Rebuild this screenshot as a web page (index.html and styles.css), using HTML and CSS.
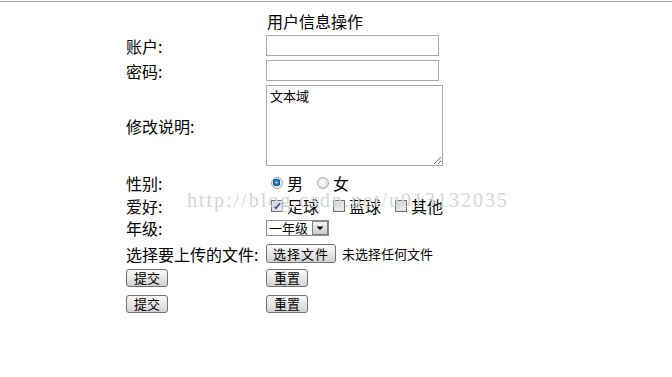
FILE: index.html
```html
<!DOCTYPE html>
<html lang="zh-CN">
<head>
    <meta charset="UTF-8">
    <title>用户信息操作</title>
    <link rel="stylesheet" href="styles.css">
</head>
<body>

<div class="page">
    <form class="user-form">
        <div class="label"></div>
        <div class="title">用户信息操作</div>

        <div class="label">账户:</div>
        <div class="field"><input type="text" class="text-box"></div>

        <div class="label">密码:</div>
        <div class="field"><input type="password" class="text-box"></div>

        <div class="label">修改说明:</div>
        <div class="field"><textarea class="note">文本域</textarea></div>

        <div class="label">性别:</div>
        <div class="field">
            <label class="opt"><input type="radio" name="sex" checked>男</label>
            <label class="opt"><input type="radio" name="sex">女</label>
        </div>

        <div class="label">爱好:</div>
        <div class="field">
            <label class="opt"><input type="checkbox" checked>足球</label>
            <label class="opt"><input type="checkbox">蓝球</label>
            <label class="opt"><input type="checkbox">其他</label>
        </div>

        <div class="label">年级:</div>
        <div class="field">
            <select class="grade">
                <option>一年级</option>
                <option>二年级</option>
                <option>三年级</option>
            </select>
        </div>

        <div class="label">选择要上传的文件:</div>
        <div class="field">
            <button type="button" class="btn file-btn">选择文件</button>
            <span class="file-name">未选择任何文件</span>
        </div>

        <div class="cell"><button type="submit" class="btn">提交</button></div>
        <div class="field"><button type="reset" class="btn">重置</button></div>

        <div class="cell"><button type="submit" class="btn">提交</button></div>
        <div class="field"><button type="reset" class="btn">重置</button></div>
    </form>

    <div class="watermark">http://blog.csdn.net/u013132035</div>
</div>

</body>
</html>
```

FILE: styles.css
```css
body {
    margin: 0;
    background: #fff;
    color: #000;
    font-family: "Noto Sans CJK SC", "Liberation Sans", sans-serif;
}
.page {
    position: relative;
    margin-top: 1px;
    border-top: 1px solid #a9a9a9;
    height: 375px;
}
.user-form {
    display: grid;
    grid-template-columns: 140px auto;
    grid-template-rows: 22px 27px 23px 87px 28px 18px 26px 25px 23px 29px;
    align-items: center;
    margin-left: 126px;
    padding-top: 8px;
    font-size: 16px;
    line-height: 18px;
}
.label {
    white-space: nowrap;
}
.title {
    padding-left: 1px;
}
.field, .cell {
    display: flex;
    align-items: center;
}
.text-box {
    box-sizing: border-box;
    width: 173px;
    height: 21px;
    margin: 0;
    border: 1px solid #a9a9a9;
    padding: 1px 3px;
    font-size: 13px;
}
.note {
    box-sizing: border-box;
    width: 177px;
    height: 81px;
    margin: 0;
    border: 1px solid #a9a9a9;
    padding: 2px 3px;
    font-family: "Noto Sans CJK SC", sans-serif;
    font-size: 13px;
    line-height: 16px;
    resize: both;
}
.opt {
    display: flex;
    align-items: center;
    margin-right: 9px;
}
.opt input {
    appearance: none;
    -webkit-appearance: none;
    box-sizing: border-box;
    width: 12px;
    height: 12px;
    margin: 0 4px 0 5px;
}
.opt input[type="radio"] {
    border: 1px solid #a8a8a8;
    border-radius: 50%;
    background: radial-gradient(circle at 40% 40%, #ffffff 0, #e6e6e6 60%, #c4c4c4 100%);
}
.opt input[type="radio"]:checked {
    background: radial-gradient(circle at 45% 45%, #a8e4ff 0, #2f90d6 1.5px, #0c4f8e 3.6px, #f2f2f2 3.8px, #cfcfcf 100%);
}
.opt input[type="checkbox"] {
    border: 1px solid #6f6f6f;
    background: linear-gradient(135deg, #cfcfcf 0, #f6f6f6 100%);
    box-shadow: inset 0 0 0 1px #e2e2e2;
}
.opt input[type="checkbox"]:checked {
    background: url("data:image/svg+xml,%3Csvg xmlns='http://www.w3.org/2000/svg' width='10' height='10'%3E%3Cpath d='M2 5 L4 7.2 L8 2.2' fill='none' stroke='%23304ea8' stroke-width='1.8'/%3E%3C/svg%3E") center / 10px 10px no-repeat, linear-gradient(135deg, #cfcfcf 0, #f6f6f6 100%);
}
.grade {
    appearance: none;
    -webkit-appearance: none;
    box-sizing: border-box;
    width: 63px;
    height: 16px;
    margin: 0;
    border: 1px solid #8d8d8d;
    padding: 0 0 0 2px;
    font-family: "Noto Sans CJK SC", sans-serif;
    font-size: 13px;
    line-height: 14px;
    background: url("data:image/svg+xml,%3Csvg xmlns='http://www.w3.org/2000/svg' width='16' height='14'%3E%3Cdefs%3E%3ClinearGradient id='g' x1='0' y1='0' x2='0' y2='1'%3E%3Cstop offset='0' stop-color='%23fafafa'/%3E%3Cstop offset='1' stop-color='%23c8c8c8'/%3E%3C/linearGradient%3E%3C/defs%3E%3Crect x='0.5' y='0.5' width='15' height='13' fill='url(%23g)' stroke='%23808080'/%3E%3Cpath d='M4.5 5.5 H11.5 L8 9 Z' fill='%23000'/%3E%3C/svg%3E") right top / 16px 14px no-repeat, #fff;
}
.btn {
    box-sizing: border-box;
    height: 18px;
    margin: 0;
    padding: 0 7px;
    border: 1px solid #707070;
    border-radius: 3px;
    background: linear-gradient(#fbfbfb, #e3e3e3 60%, #d2d2d2);
    font-family: "Noto Sans CJK SC", sans-serif;
    font-size: 13px;
    line-height: 15px;
    color: #000;
}
.file-btn {
    height: 19px;
    padding: 0 6px;
    letter-spacing: 1px;
}
.file-name {
    margin-left: 6px;
    font-size: 13px;
}
.watermark {
    position: absolute;
    left: 187px;
    top: 187px;
    font-family: "Liberation Serif", serif;
    font-size: 20px;
    letter-spacing: 2px;
    color: #d6d6d6;
    pointer-events: none;
}
```
